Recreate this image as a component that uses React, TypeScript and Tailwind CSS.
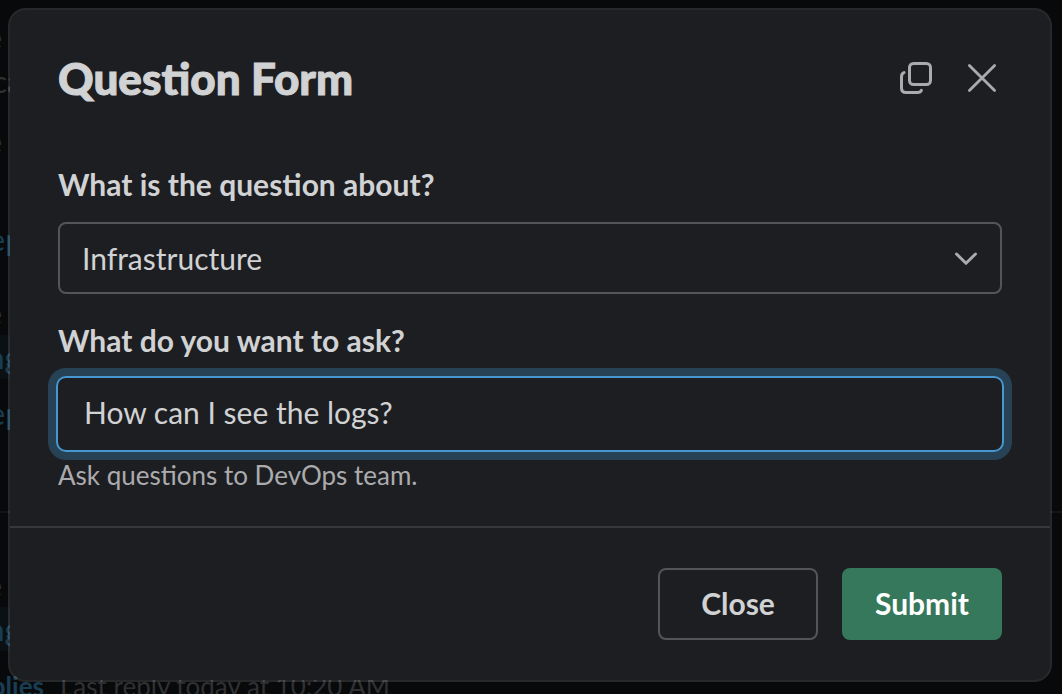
import { useState } from "react";
import type { ReactNode } from "react";

const link = "text-[#193e53]";
const muted = "text-[#303133]";

function FeedLine({ className, children }: { className: string; children: ReactNode }) {
  return (
    <div className={`flex h-11 shrink-0 items-center justify-end whitespace-nowrap ${className}`}>
      {children}
    </div>
  );
}

// Dimmed conversation that shows around the edges of the dialog.
function ChannelFeed() {
  return (
    <div
      aria-hidden="true"
      className="absolute inset-0 flex flex-col overflow-hidden pt-[15px] text-[30px] leading-[44px]"
    >
      <FeedLine className={`w-[2px] ${muted}`}>the</FeedLine>
      <FeedLine className={`w-[22px] ${muted}`}>ca</FeedLine>
      <FeedLine className={`mt-4 w-[2px] ${muted}`}>the</FeedLine>
      <FeedLine className={`mt-[54px] w-[22px] ${link}`}>rep</FeedLine>
      <FeedLine className={`mt-[30px] w-[2px] ${muted}`}>the</FeedLine>
      <FeedLine className={`w-[20px] bg-[#0a1014] ${link}`}>ng</FeedLine>
      <FeedLine className={`mt-3 w-[22px] ${link}`}>rep</FeedLine>
      <div className="mt-[76px] h-[2px] shrink-0 bg-[#131416]" />
      <FeedLine className={`mt-[50px] w-[2px] ${muted}`}>the</FeedLine>
      <FeedLine className={`w-[20px] bg-[#0a1014] ${link}`}>ng</FeedLine>
      <div className="mt-[13px] flex h-11 shrink-0 items-center whitespace-nowrap text-[26px]">
        <span className={`flex w-11 shrink-0 justify-end font-bold ${link}`}>replies</span>
        <span className={`ml-4 ${muted}`}>Last reply today at 10:20 AM</span>
      </div>
    </div>
  );
}

function WindowIcon() {
  return (
    <svg width="32" height="32" viewBox="0 0 32 32" fill="none" stroke="currentColor" strokeWidth="3" strokeLinecap="round">
      <rect x="9.5" y="1.5" width="21" height="21" rx="4" />
      <path d="M4 10.6C2.3 11.2 1.5 12.5 1.5 14.5V26C1.5 29 3 30.5 6 30.5H17.5C19.6 30.5 20.8 29.8 21.4 28.4" />
    </svg>
  );
}

function CloseIcon() {
  return (
    <svg width="32" height="32" viewBox="0 0 32 32" fill="none" stroke="currentColor" strokeWidth="2.8" strokeLinecap="round">
      <path d="M3.4 3.4L28.6 28.6M28.6 3.4L3.4 28.6" />
    </svg>
  );
}

export default function App() {
  const [topic, setTopic] = useState("Infrastructure");
  const [question, setQuestion] = useState("How can I see the logs?");
  const iconButton = "flex size-14 items-center justify-center rounded-lg text-[#ababad]";

  return (
    <div className="relative min-h-screen overflow-hidden bg-[#08090a] pt-2 pr-[10px] pb-3 pl-2 font-['Lato',sans-serif] text-[#d1d2d3]">
      <ChannelFeed />
      <form
        role="dialog"
        aria-labelledby="form-title"
        onSubmit={(e) => e.preventDefault()}
        className="relative rounded-[18px] border-2 border-white/13 bg-[#1d1e22] bg-clip-padding"
      >
        <header className="flex items-start justify-between px-12 pt-10">
          <h1 id="form-title" className="text-[44px] leading-[56px] font-black [-webkit-text-stroke:1px_#d1d2d3]">
            Question Form
          </h1>
          <div className="-mr-2 flex gap-[10px]">
            <button type="button" aria-label="Open in new window" className={iconButton}>
              <WindowIcon />
            </button>
            <button type="button" aria-label="Close dialog" className={iconButton}>
              <CloseIcon />
            </button>
          </div>
        </header>

        <div className="flex flex-col px-12 pt-14 pb-[30px]">
          <label htmlFor="topic" className="text-[30px] leading-[44px] font-bold">
            What is the question about?
          </label>
          <div className="relative mt-4">
            <select
              id="topic"
              value={topic}
              onChange={(e) => setTopic(e.target.value)}
              className="h-[72px] w-full appearance-none rounded-lg border-2 border-[#545558] bg-[#1d1e22] pr-16 pl-[22px] text-[30px] outline-none"
            >
              <option>Infrastructure</option>
            </select>
            <svg
              className="pointer-events-none absolute top-6 right-6 text-[#ababad]"
              width="24"
              height="24"
              viewBox="0 0 24 24"
              fill="none"
              stroke="currentColor"
              strokeWidth="3"
              strokeLinecap="round"
              strokeLinejoin="round"
            >
              <path d="M2.5 8L12 17.3L21.5 8" />
            </svg>
          </div>

          <label htmlFor="question" className="mt-6 text-[30px] leading-[44px] font-bold">
            What do you want to ask?
          </label>
          <input
            id="question"
            type="text"
            value={question}
            onChange={(e) => setQuestion(e.target.value)}
            aria-describedby="question-hint"
            className="mt-4 h-[72px] w-full rounded-lg bg-[#1d1e22] px-[26px] pb-1 text-[30px] shadow-[0_0_0_2px_#4697cf,0_0_0_10px_#274155] outline-none"
          />
          <p id="question-hint" className="mt-1 text-[26px] leading-[42px] text-[#ababad]">
            Ask questions to DevOps team.
          </p>
        </div>

        <footer className="flex justify-end gap-6 border-t-2 border-[#37383c] px-12 py-10 text-[30px] font-bold">
          <button type="button" className="h-[72px] w-40 rounded-lg border-2 border-[#545558] pb-[2px]">
            Close
          </button>
          <button type="submit" className="h-[72px] w-40 rounded-lg bg-[#35785b] pb-[2px] text-white">
            Submit
          </button>
        </footer>
      </form>
    </div>
  );
}
